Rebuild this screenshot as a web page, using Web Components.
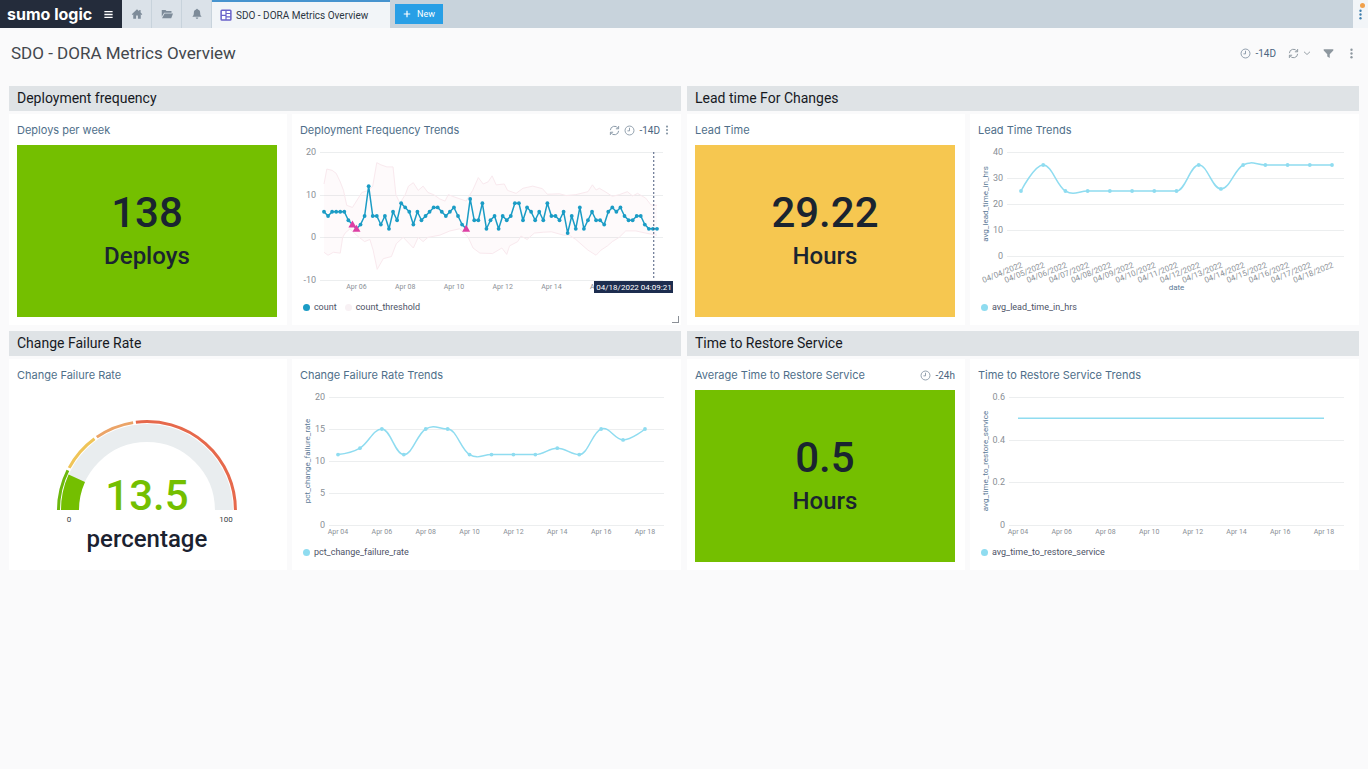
<!DOCTYPE html>
<html lang="en">
<head>
<meta charset="utf-8">
<meta name="viewport" content="width=device-width, initial-scale=1">
<title>SDO - DORA Metrics Overview</title>
<style>
  body {
    margin: 0;
    background: #fafafb;
    font-family: Roboto, "Liberation Sans", sans-serif;
    color: #16191f;
  }

  main {
    display: grid;
    grid-template-columns: 1fr 1fr;
    gap: 6px;
    padding: 0 9px 24px;
  }
</style>
</head>
<body>
  <app-topbar></app-topbar>
  <dashboard-header heading="SDO - DORA Metrics Overview" range="-14D"></dashboard-header>

  <main>
    <dash-section heading="Deployment frequency">
      <dash-panel heading="Deploys per week">
        <single-value value="138" unit="Deploys" color="#74bf00"></single-value>
      </dash-panel>
      <dash-panel heading="Deployment Frequency Trends" range="-14D" selected>
        <line-chart data-chart="deploys"></line-chart>
      </dash-panel>
    </dash-section>

    <dash-section heading="Lead time For Changes">
      <dash-panel heading="Lead Time">
        <single-value value="29.22" unit="Hours" color="#f6c750"></single-value>
      </dash-panel>
      <dash-panel heading="Lead Time Trends">
        <line-chart data-chart="leadTime"></line-chart>
      </dash-panel>
    </dash-section>

    <dash-section heading="Change Failure Rate">
      <dash-panel heading="Change Failure Rate">
        <gauge-chart value="13.5" unit="percentage"></gauge-chart>
      </dash-panel>
      <dash-panel heading="Change Failure Rate Trends">
        <line-chart data-chart="failureRate"></line-chart>
      </dash-panel>
    </dash-section>

    <dash-section heading="Time to Restore Service">
      <dash-panel heading="Average Time to Restore Service" range="-24h">
        <single-value value="0.5" unit="Hours" color="#74bf00"></single-value>
      </dash-panel>
      <dash-panel heading="Time to Restore Service Trends">
        <line-chart data-chart="restoreTime"></line-chart>
      </dash-panel>
    </dash-section>
  </main>

<script>
// Icons, all on a 16x16 grid
const ICONS = {
  menu: '<path d="M2 3.8h12M2 8h12M2 12.2h12" fill="none" stroke="currentColor" stroke-width="1.9"/>',
  home: '<path d="M8 1.6 1 8.2l1 1.1 1-.9V14.4h3.8V10h2.4v4.4H13V8.4l1 .9 1-1.1-2.2-2.1V2.6h-1.9v1.7z" fill="currentColor"/>',
  folder: '<path d="M1 2.5h5l1.3 1.6H14v2.2H4.2L1 11.6z" fill="currentColor"/><path d="M4.8 7.3H16l-2.4 6.4H1.4z" fill="currentColor"/>',
  bell: '<path d="M8 1c.7 0 1.1.5 1.1 1.1 2 .5 3.1 2.1 3.1 4.2 0 3 .7 4.2 2 5.4H1.8c1.3-1.2 2-2.4 2-5.4 0-2.1 1.1-3.7 3.1-4.2C6.9 1.5 7.3 1 8 1zM6.3 12.7h3.4c0 1-.7 1.7-1.7 1.7s-1.7-.7-1.7-1.7z" fill="currentColor"/>',
  board: '<rect x="1.5" y="1.5" width="13" height="13" rx="1" fill="#fff" stroke="currentColor" stroke-width="2"/><path d="M8 1.5v13M1.5 8.500H8M8 6h6.5M8 10.500h6.5" stroke="currentColor" stroke-width="1.600" fill="none"/>',
  plus: '<path d="M8 1.5v13M1.5 8h13" stroke="currentColor" stroke-width="2.4" fill="none"/>',
  clock: '<circle cx="8" cy="8" r="6.5" fill="none" stroke="currentColor" stroke-width="1.3"/><path d="M8 4v4.5H5" fill="none" stroke="currentColor" stroke-width="1.3"/>',
  refresh: '<path d="M2 7.5A6 6 0 0 1 13.3 5M14 8.5A6 6 0 0 1 2.7 11" fill="none" stroke="currentColor" stroke-width="1.4"/><path d="M14 1.5v4h-4M2 14.5v-4h4" fill="none" stroke="currentColor" stroke-width="1.4"/>',
  chevron: '<path d="M2 5.5l6 5.5 6-5.5" fill="none" stroke="currentColor" stroke-width="1.8"/>',
  filter: '<path d="M1 1.8h14v2L9.8 9v5.7L6.2 12.5V9L1 3.8z" fill="currentColor"/>',
  kebab: '<circle cx="8" cy="2.5" r="1.7" fill="currentColor"/><circle cx="8" cy="8" r="1.7" fill="currentColor"/><circle cx="8" cy="13.5" r="1.7" fill="currentColor"/>'
};

function icon(name, size = 12) {
  return `<svg width="${size}" height="${size}" viewBox="0 0 16 16" aria-hidden="true">${ICONS[name]}</svg>`;
}

// Shared by every element with buttons
const BUTTON_RESET = `
  button {
    display: flex;
    align-items: center;
    justify-content: center;
    margin: 0;
    padding: 0;
    border: 0;
    background: none;
    color: inherit;
    font: inherit;
    cursor: pointer;
  }
  svg { display: block; flex: none; }
`;

class AppTopbar extends HTMLElement {
  constructor() {
    super();
    this.attachShadow({ mode: 'open' });
  }

  connectedCallback() {
    this.shadowRoot.innerHTML = `
      <style>
        ${BUTTON_RESET}
        :host {
          display: flex;
          height: 28px;
          background: #c8d3dc;
          color: #7d8b99;
        }
        .brand {
          display: flex;
          align-items: center;
          gap: 11px;
          box-sizing: border-box;
          width: 122px;
          padding-left: 7px;
          background: #242c3b;
          color: #fff;
        }
        .logo {
          color: #fff;
          font: 700 16px/24px Inter, sans-serif;
          text-decoration: none;
        }
        nav { display: flex; }
        .shortcut {
          width: 30px;
          border-right: 1px solid #c8d3dc;
          box-sizing: border-box;
          background: #dbe2e9;
        }
        .tab {
          display: flex;
          align-items: center;
          gap: 4px;
          box-sizing: border-box;
          width: 178px;
          padding-left: 8px;
          border-top: 2px solid #4794cf;
          background: #f2f5f8;
          color: #2c3542;
          font-size: 10px;
          text-decoration: none;
        }
        .tab svg { color: #6a62c9; }
        .new {
          align-self: center;
          gap: 6px;
          width: 48px;
          height: 20px;
          margin-left: 5px;
          background: #289fe6;
          color: #fff;
          font-size: 9px;
        }
        .more {
          position: relative;
          width: 15px;
          margin-left: auto;
          background: #f2f5f8;
          color: #3f7fae;
        }
        .dot {
          position: absolute;
          top: 3px;
          right: 3px;
          width: 5px;
          height: 5px;
          border-radius: 50%;
          background: #f0a04b;
        }
      </style>
      <div class="brand">
        <a class="logo" href="#">sumo logic</a>
        <button aria-label="Menu">${icon('menu', 11)}</button>
      </div>
      <nav>
        <button class="shortcut" aria-label="Home">${icon('home')}</button>
        <button class="shortcut" aria-label="Library">${icon('folder')}</button>
        <button class="shortcut" aria-label="Alerts">${icon('bell')}</button>
        <a class="tab" href="#">${icon('board')}SDO - DORA Metrics Overview</a>
      </nav>
      <button class="new">${icon('plus', 8)}New</button>
      <button class="more" aria-label="More">${icon('kebab', 11)}<span class="dot"></span></button>
    `;
  }
}

class DashboardHeader extends HTMLElement {
  constructor() {
    super();
    this.attachShadow({ mode: 'open' });
  }

  connectedCallback() {
    this.shadowRoot.innerHTML = `
      <style>
        ${BUTTON_RESET}
        :host {
          display: flex;
          align-items: center;
          justify-content: space-between;
          padding: 12px 11px 20px;
        }
        h1 {
          margin: 0;
          color: #43474d;
          font-size: 17px;
          font-weight: 400;
          line-height: 26px;
        }
        .actions {
          display: flex;
          align-items: center;
          gap: 12px;
          color: #8d979f;
        }
        .range {
          gap: 4px;
          color: #8292a3;
          font-size: 10px;
        }
        .range span { color: #4b6580; }
        .refresh { gap: 4px; }
      </style>
      <h1>${this.getAttribute('heading')}</h1>
      <div class="actions">
        <button class="range" aria-label="Time range">${icon('clock', 11)}<span>${this.getAttribute('range')}</span></button>
        <button class="refresh" aria-label="Refresh">${icon('refresh', 11)}${icon('chevron', 8)}</button>
        <button aria-label="Filter">${icon('filter', 11)}</button>
        <button aria-label="Options">${icon('kebab', 11)}</button>
      </div>
    `;
  }
}

class DashSection extends HTMLElement {
  constructor() {
    super();
    this.attachShadow({ mode: 'open' });
  }

  connectedCallback() {
    this.shadowRoot.innerHTML = `
      <style>
        :host {
          display: flex;
          flex-direction: column;
          gap: 3px;
          min-width: 0;
        }
        h2 {
          margin: 0;
          padding: 0 8px;
          background: #dfe3e6;
          font-size: 14px;
          font-weight: 400;
          line-height: 25px;
        }
        .panels {
          display: grid;
          grid-template-columns: 5fr 7fr;
          gap: 5px;
        }
      </style>
      <h2>${this.getAttribute('heading')}</h2>
      <div class="panels"><slot></slot></div>
    `;
  }
}

class DashPanel extends HTMLElement {
  constructor() {
    super();
    this.attachShadow({ mode: 'open' });
  }

  connectedCallback() {
    const range = this.getAttribute('range');
    const selected = this.hasAttribute('selected');

    this.shadowRoot.innerHTML = `
      <style>
        ${BUTTON_RESET}
        :host {
          position: relative;
          display: flex;
          flex-direction: column;
          gap: 7px;
          min-width: 0;
          padding: 8px 10px 8px 8px;
          background: #fff;
        }
        header {
          display: flex;
          align-items: center;
          justify-content: space-between;
          height: 16px;
          color: #4f6f8a;
        }
        h3 {
          margin: 0;
          font-family: Inter, sans-serif;
          font-size: 11px;
          font-weight: 400;
          line-height: 16px;
        }
        .tools {
          display: flex;
          align-items: center;
          gap: 4px;
          color: #8797a5;
        }
        .range { gap: 4px; font-size: 10px; }
        .range span { color: #4b6580; }
        .tools .kebab { width: 7px; overflow: hidden; }
        .grip {
          position: absolute;
          right: 2px;
          bottom: 2px;
          width: 6px;
          height: 6px;
          border: solid #8a8f96;
          border-width: 0 1px 1px 0;
        }
      </style>
      <header>
        <h3>${this.getAttribute('heading')}</h3>
        ${range ? `
        <div class="tools">
          ${selected ? `<button aria-label="Refresh">${icon('refresh', 11)}</button>` : ''}
          <button class="range" aria-label="Time range">${icon('clock', 11)}<span>${range}</span></button>
          ${selected ? `<button class="kebab" aria-label="Options">${icon('kebab', 10)}</button>` : ''}
        </div>` : ''}
      </header>
      <slot></slot>
      ${selected ? '<span class="grip"></span>' : ''}
    `;
  }
}

class SingleValue extends HTMLElement {
  constructor() {
    super();
    this.attachShadow({ mode: 'open' });
  }

  connectedCallback() {
    this.shadowRoot.innerHTML = `
      <style>
        :host {
          display: flex;
          flex-direction: column;
          align-items: center;
          justify-content: center;
          gap: 6px;
          height: 172px;
          background: ${this.getAttribute('color')};
          color: #1a2430;
          font-weight: 500;
        }
        .value { font-size: 42px; line-height: 44px; }
        .unit { font-size: 24px; line-height: 30px; }
      </style>
      <span class="value">${this.getAttribute('value')}</span>
      <span class="unit">${this.getAttribute('unit')}</span>
    `;
  }
}

class GaugeChart extends HTMLElement {
  constructor() {
    super();
    this.attachShadow({ mode: 'open' });
  }

  // Arc between two percentages on the half circle around 130,120
  arc(from, to, r) {
    const point = pct => {
      const a = Math.PI * (1 - pct / 100);
      return `${(130 + r * Math.cos(a)).toFixed(2)} ${(120 - r * Math.sin(a)).toFixed(2)}`;
    };
    return `M${point(from)}A${r} ${r} 0 0 1 ${point(to)}`;
  }

  connectedCallback() {
    const value = Number(this.getAttribute('value'));
    const bands = [
      [0, 14.8, '#6cb80c'],
      [15.8, 29.8, '#efc458'],
      [30.8, 45, '#eba468'],
      [46, 100, '#e6694c']
    ];

    this.shadowRoot.innerHTML = `
      <style>
        :host { display: block; height: 172px; }
        svg { display: block; width: 100%; height: 172px; }
        text { text-anchor: middle; font-weight: 500; }
        .value { font-size: 42px; fill: #74bf00; }
        .unit { font-size: 24px; fill: #1b2230; }
        .limit { font-size: 8px; font-weight: 400; fill: #333a42; }
      </style>
      <svg viewBox="0 0 260 172" fill="none">
        <path d="${this.arc(0, 100, 77)}" stroke="#e9edef" stroke-width="18"/>
        <path d="${this.arc(0, value, 77)}" stroke="#74bf00" stroke-width="18"/>
        ${bands.map(([from, to, color]) => `<path d="${this.arc(from, to, 88.5)}" stroke="${color}" stroke-width="3"/>`).join('')}
        <text class="value" x="130" y="120">${value}</text>
        <text class="limit" x="52" y="132">0</text>
        <text class="limit" x="209" y="132">100</text>
        <text class="unit" x="130" y="157">${this.getAttribute('unit')}</text>
      </svg>
    `;
  }
}

const EVEN_DAYS = ['Apr 04', 'Apr 06', 'Apr 08', 'Apr 10', 'Apr 12', 'Apr 14', 'Apr 16', 'Apr 18'];

// left/right: grid line insets, first/last: insets of the first and last point
const CHARTS = {
  deploys: {
    name: 'count',
    color: '#1b9cc5',
    min: -10, max: 20, ticks: [20, 10, 0, -10], bottom: 135,
    left: 20, right: 8, first: 24, last: 14,
    xLabels: EVEN_DAYS.slice(1, 7).map((text, i) => ({ text, at: 8 + i * 12 })),
    data: [6, 5, 6, 6, 6, 6, 4, 3, 2, 3, 5, 12, 5, 5, 3, 5, 2, 6, 4, 8, 7, 6, 3, 6, 4, 5, 6, 7, 7, 6, 5, 6, 7, 5, 3, 2,
      9, 4, 4, 8, 2, 4, 5, 2, 5, 4, 5, 8, 8, 4, 7, 6, 4, 6, 4, 8, 5, 5, 4, 6, 1, 5, 2, 7, 2, 4, 6, 4, 4, 3, 6, 7, 6, 7, 5,
      4, 4, 5, 5, 3, 2, 2, 2],
    outliers: [7, 8, 35],
    band: {
      name: 'count_threshold',
      upper: [[0, 12.5], [0.7, 16], [2, 15.7], [3, 15], [4, 13], [4.8, 11], [5.6, 7.5], [7, 7], [8, 8.5], [9.3, 10.5],
        [11, 11], [12, 12], [13, 17.5], [14, 17], [15.5, 16.5], [17, 16.5], [17.7, 10], [18.7, 8], [20, 10], [20.8, 12],
        [22, 12.8], [23.2, 11], [24.4, 12], [25.6, 10.5], [27, 10], [28.5, 9], [29.8, 8.5], [30.6, 10], [32, 9.5],
        [33.5, 9], [35, 8.5], [36.6, 11], [38, 14], [39.2, 12.5], [40.4, 13], [41.4, 14.4], [42.4, 12.3],
        [44.4, 12.5], [45.2, 11], [47.3, 10.3], [49, 11.5], [51.4, 12], [53.8, 11.4], [55, 10.1], [58, 10.2],
        [59.6, 9.8], [62, 10], [65, 10.7], [66.1, 12.3], [67, 11.1], [67.8, 11.5], [69.4, 10.6], [71, 9.6], [72.7, 10],
        [74.7, 10.7], [76, 9.7], [77.2, 10.3], [79.2, 9.2], [80.5, 7.6], [82, 7.5]],
      lower: [[0, -3.5], [1, -4.2], [2.3, -3.5], [4, -3.7], [4.6, 0], [5.2, 1], [6.4, 2], [8, 0.5], [10, -1], [11.3, -0.5],
        [12.1, -3], [13.1, -7.5], [14.6, -5], [16.6, -4.5], [17.8, -1.5], [19.5, 0], [22, -2.5], [23.2, 0], [24.4, -1],
        [25.6, 0], [28.5, 0.5], [31, 1.5], [33.4, 2], [35.5, 0], [36.7, -2.5], [38.4, -3.7], [41.5, -3.8], [43.8, -2.5],
        [45, -4], [45.7, -2], [47.7, -1], [48.5, 0.3], [50, -0.5], [51.8, 1], [54, 1.2], [56, 1.3], [59, 0.5],
        [60.4, 0.5], [62, -0.5], [65, -3], [67, -4.2], [68.2, -3], [69.8, -2], [71, -1], [72.7, 0], [74.3, 1.5],
        [76.8, 1.5], [79.2, 1], [82, 0.5]]
    },
    cursor: { at: 81.2, text: '04/18/2022 04:09:21' }
  },
  leadTime: {
    name: 'avg_lead_time_in_hrs',
    color: '#8fdcf0',
    min: 0, max: 40, ticks: [40, 30, 20, 10, 0], bottom: 111,
    left: 29, right: 5, first: 43, last: 17,
    yTitle: 'avg_lead_time_in_hrs', xTitle: 'date', slanted: true, smooth: true, markers: true,
    xLabels: Array.from({ length: 15 }, (_, i) => ({ text: `04/${String(i + 4).padStart(2, '0')}/2022`, at: i })),
    data: [25, 35, 25, 25, 25, 25, 25, 25, 35, 25.8, 35, 35, 35, 35, 35]
  },
  failureRate: {
    name: 'pct_change_failure_rate',
    color: '#8fdcf0',
    min: 0, max: 20, ticks: [20, 15, 10, 5, 0], bottom: 135,
    left: 29, right: 7, first: 38, last: 26,
    yTitle: 'pct_change_failure_rate', smooth: true, markers: true,
    xLabels: EVEN_DAYS.map((text, i) => ({ text, at: i * 2 })),
    data: [11, 12, 15, 11, 15, 15, 11, 11, 11, 11, 12, 11, 15, 13.3, 15]
  },
  restoreTime: {
    name: 'avg_time_to_restore_service',
    color: '#8fdcf0',
    min: 0, max: 0.6, ticks: [0.6, 0.4, 0.2, 0], bottom: 135,
    left: 31, right: 5, first: 40, last: 25,
    yTitle: 'avg_time_to_restore_service',
    xLabels: EVEN_DAYS.map((text, i) => ({ text, at: i * 2 })),
    data: Array(15).fill(0.5)
  }
};

const CHART_TOP = 7;

class LineChart extends HTMLElement {
  constructor() {
    super();
    this.attachShadow({ mode: 'open' });
  }

  connectedCallback() {
    const c = CHARTS[this.dataset.chart];

    this.shadowRoot.innerHTML = `
      <style>
        :host {
          display: flex;
          flex-direction: column;
          height: 172px;
          min-width: 0;
        }
        svg {
          display: block;
          width: 100%;
          height: 155px;
          overflow: visible;
        }
        .grid { stroke: #eceeef; }
        .tick { font-size: 9px; fill: #8a8f96; text-anchor: end; }
        .label { font-size: 7px; fill: #8a8f96; text-anchor: middle; }
        .label.slanted { font-size: 8px; text-anchor: end; }
        .title { font-size: 8px; fill: #5b7a96; text-anchor: middle; }
        .tip { font-size: 8px; fill: #fff; text-anchor: middle; }
        ul {
          display: flex;
          gap: 8px;
          margin: 0;
          padding: 0 0 0 3px;
          list-style: none;
          color: #4d5266;
          font-size: 9px;
          line-height: 14px;
        }
        li {
          display: flex;
          align-items: center;
          gap: 4px;
        }
        i {
          width: 7px;
          height: 7px;
          border-radius: 50%;
        }
      </style>
      <svg role="img" aria-label="${c.name}"></svg>
      <ul>
        <li><i style="background: ${c.color}"></i>${c.name}</li>
        ${c.band ? `<li><i style="background: #f8f1f4"></i>${c.band.name}</li>` : ''}
      </ul>
    `;

    this.draw();
    this.observer = new ResizeObserver(() => this.draw());
    this.observer.observe(this);
  }

  disconnectedCallback() {
    this.observer.disconnect();
  }

  // Cubic spline through the points, flat only at the two ends
  spline(points) {
    let d = `M${points[0]}`;
    let handle = points[0];
    for (let i = 1; i < points.length; i++) {
      const [x0, y0] = points[i - 1];
      const [x, y] = points[i];
      let left = [x, y];
      let right = [x, y];
      if (i < points.length - 1) {
        const [x1, y1] = points[i + 1];
        const lx = (1.5 * x + x0) / 2.5;
        const rx = (1.5 * x + x1) / 2.5;
        let ly = (1.5 * y + y0) / 2.5;
        let ry = (1.5 * y + y1) / 2.5;
        const shift = ((ry - ly) * (rx - x)) / (rx - lx) + y - ry;
        ly += shift;
        ry += shift;
        if (ly > y0 && ly > y) {
          ly = Math.max(y0, y);
          ry = 2 * y - ly;
        } else if (ly < y0 && ly < y) {
          ly = Math.min(y0, y);
          ry = 2 * y - ly;
        }
        left = [lx, ly];
        right = [rx, ry];
      }
      d += `C${handle} ${left} ${x},${y}`;
      handle = right;
    }
    return d;
  }

  draw() {
    const c = CHARTS[this.dataset.chart];
    const svg = this.shadowRoot.querySelector('svg');
    const width = this.clientWidth;
    const step = (width - c.last - c.first) / (c.data.length - 1);
    const px = i => c.first + i * step;
    const py = v => CHART_TOP + ((c.max - v) / (c.max - c.min)) * (c.bottom - CHART_TOP);
    const points = c.data.map((v, i) => [px(i), py(v)]);
    let out = '';

    // Grid and value axis
    c.ticks.forEach(v => {
      const y = Math.round(py(v));
      out += `<path class="grid" d="M${c.left} ${y + 0.5}H${width - c.right}"/>`;
      out += `<text class="tick" x="${c.left - 4}" y="${y + 3}">${v}</text>`;
    });

    // Date axis
    c.xLabels.forEach(({ text, at }) => {
      const x = px(at);
      out += c.slanted
        ? `<text class="label slanted" transform="translate(${x + 2} ${c.bottom + 11}) rotate(-22)">${text}</text>`
        : `<text class="label" x="${x}" y="${c.bottom + 9}">${text}</text>`;
    });

    if (c.yTitle) {
      const middle = (CHART_TOP + c.bottom) / 2;
      out += `<text class="title" transform="translate(10 ${middle}) rotate(-90)">${c.yTitle}</text>`;
    }
    if (c.xTitle) {
      out += `<text class="title" x="${(c.first + width - c.last) / 2}" y="145">${c.xTitle}</text>`;
    }

    if (c.band) {
      const upper = c.band.upper.map(([i, v]) => [px(i), py(v)]);
      const lower = c.band.lower.map(([i, v]) => [px(i), py(v)]);
      out += `<path d="M${upper.join('L')}L${lower.reverse().join('L')}Z" fill="#e8508c" fill-opacity="0.03"/>`;
      out += `<path d="M${upper.join('L')}M${lower.join('L')}" fill="none" stroke="#f9e9ee"/>`;
    }

    // Series
    const line = c.smooth ? this.spline(points) : `M${points.join('L')}`;
    out += `<path d="${line}" fill="none" stroke="${c.color}" stroke-width="1.5" stroke-linejoin="round"/>`;
    points.forEach(([x, y], i) => {
      if (c.outliers && c.outliers.includes(i)) {
        out += `<path d="M${x - 4} ${y + 3}h8l-4 -7z" fill="#dd3fa4"/>`;
      } else if (c.markers || c.band) {
        out += `<circle cx="${x}" cy="${y}" r="1.9" fill="${c.color}"/>`;
      }
    });

    if (c.cursor) {
      const x = px(c.cursor.at);
      out += `<path d="M${x} ${CHART_TOP}V${c.bottom}" stroke="#4a5a7c" stroke-dasharray="2 2"/>`;
      out += `<rect x="${width - 77}" y="${c.bottom + 1}" width="79" height="12" fill="#1d2d4f"/>`;
      out += `<text class="tip" x="${width - 37}" y="${c.bottom + 10}">${c.cursor.text}</text>`;
    }

    svg.innerHTML = out;
  }
}

customElements.define('app-topbar', AppTopbar);
customElements.define('dashboard-header', DashboardHeader);
customElements.define('dash-section', DashSection);
customElements.define('dash-panel', DashPanel);
customElements.define('single-value', SingleValue);
customElements.define('gauge-chart', GaugeChart);
customElements.define('line-chart', LineChart);
</script>
</body>
</html>
